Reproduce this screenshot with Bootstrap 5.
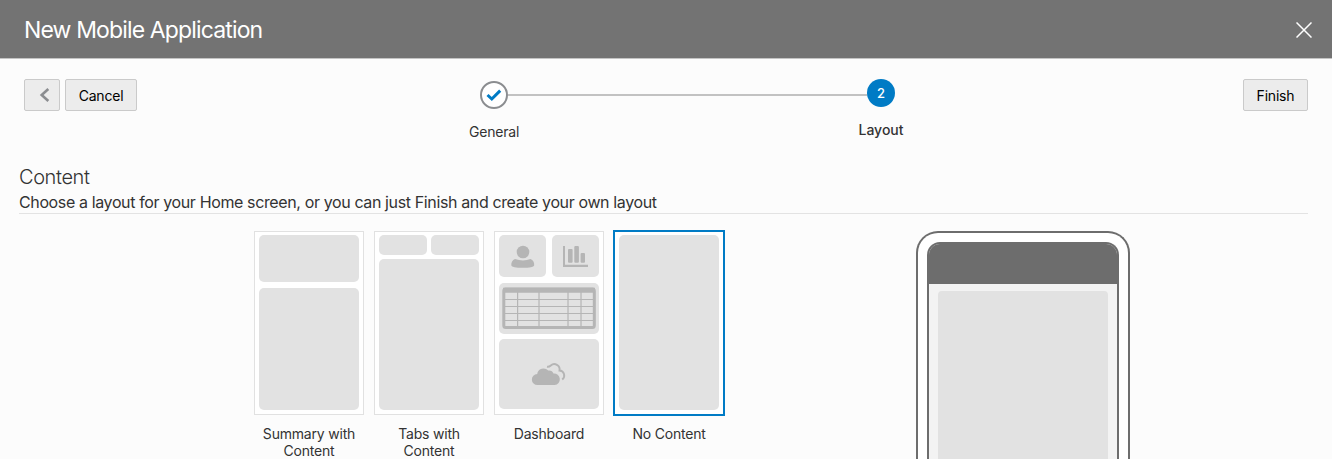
<!DOCTYPE html>
<html lang="en">
<head>
<meta charset="utf-8">
<meta name="viewport" content="width=device-width, initial-scale=1">
<title>New Mobile Application</title>
<link href="https://cdn.jsdelivr.net/npm/bootstrap@5.3.0/dist/css/bootstrap.min.css" rel="stylesheet">
<style>
  body { font-family: Inter, "Liberation Sans", sans-serif; font-size: 14px; letter-spacing: -.2px; color: #333; background: #fcfcfc; height: 459px; overflow: hidden; }
  .wizard-header { height: 59px; background: #737373; border-bottom: 1px solid #c4c4c4; padding: 0 20px 0 24px; }
  .wizard-title { font-size: 23px; font-weight: 400; line-height: 30px; letter-spacing: -.86px; padding-top: 2px; }
  .wizard-bar { padding: 20px 24px 0; height: 103px; }
  .wizard-btn { height: 32px; padding: 2px 0 0; font-size: 14px; line-height: 1; letter-spacing: -.2px; color: #000; background: #ececec; border: 1px solid #cacaca; border-radius: 2px; }
  .steps { width: 415px; margin-left: 343px; }
  .step-item { width: 28px; white-space: nowrap; line-height: 18px; }
  .step-dot { width: 28px; height: 28px; flex: none; font-size: 13px; }
  .step-done { border: 2px solid #8b8d90; background: #fff; }
  .step-now { background: #007bc5; color: #fff; font-weight: 500; }
  .step-label { margin-top: 14px; }
  .step-label-now { font-weight: 500; letter-spacing: 0; }
  .step-line { height: 2px; background: #c2c2c2; margin-top: 15px; }
  .content-area { margin: 0 24px 0 19px; border-bottom: 1px solid #e3e3e3; height: 52px; }
  .content-title { font-size: 20px; font-weight: 300; line-height: 26px; letter-spacing: -.4px; padding-top: 2px; }
  .content-hint { font-size: 16px; line-height: 20px; letter-spacing: -.375px; margin-top: 2px; }
  .choices { padding: 17px 0 0 254px; gap: 10px; height: 245px; overflow: hidden; }
  .choice { width: 110px; }
  .thumb { height: 184px; border: 1px solid #e1e1e1; background: #fff; padding: 3px 4px 4px; }
  .thumb.selected { outline: 2px solid #007bc5; outline-offset: -1px; border-color: transparent; }
  .tile { background: #e2e2e2; border-radius: 5px; flex: none; }
  .choice-name { line-height: 17px; margin-top: 10px; }
  .device { width: 214px; height: 228px; border: 2px solid #6d6d6d; border-bottom: 0; border-radius: 22px 22px 0 0; background: #fff; padding: 9px 9px 0; margin-left: 182px; }
  .screen { border: 2px solid #6d6d6d; border-bottom: 0; border-radius: 13px 13px 0 0; background: #f3f3f3; overflow: hidden; }
  .screen-top { height: 40px; background: #6d6d6d; }
  .screen-body { height: 168px; margin: 7px 9px 0; border-radius: 4px 4px 0 0; background: #e2e2e2; }
</style>
</head>
<body>
<header class="wizard-header d-flex align-items-center justify-content-between">
  <h1 class="wizard-title text-white m-0">New Mobile Application</h1>
  <svg width="16" height="16" viewBox="0 0 16 16" stroke="#fff" stroke-width="1.5" style="margin-top:2px"><path d="M.5.5l15 15M15.500.5l-15 15"/></svg>
</header>

<div class="wizard-bar d-flex align-items-start">
  <button class="wizard-btn" style="width:36px" aria-label="Back"><svg class="d-block mx-auto" width="18" height="16" viewBox="0 0 18 16" fill="none" stroke="#8b8d90" stroke-width="2.6"><path d="M15.300 1L8.700 7l6.600 6"/></svg></button>
  <button class="wizard-btn" style="width:72px;margin-left:5px">Cancel</button>
  <div class="steps d-flex align-items-start">
    <div class="step-item d-flex flex-column align-items-center" style="padding-top:2px">
      <span class="step-dot step-done rounded-circle d-flex align-items-center justify-content-center"><svg width="16" height="14" viewBox="0 0 16 14" fill="none" stroke="#007bc5" stroke-width="3"><path d="M1.500 7l4.300 4L14.200 2.600"/></svg></span>
      <span class="step-label">General</span>
    </div>
    <div class="step-line flex-fill"></div>
    <div class="step-item d-flex flex-column align-items-center">
      <span class="step-dot step-now rounded-circle d-flex align-items-center justify-content-center">2</span>
      <span class="step-label step-label-now">Layout</span>
    </div>
  </div>
  <button class="wizard-btn ms-auto" style="width:65px">Finish</button>
</div>

<section class="content-area">
  <h2 class="content-title m-0">Content</h2>
  <p class="content-hint mb-0">Choose a layout for your Home screen, or you can just Finish and create your own layout</p>
</section>

<main class="choices d-flex align-items-start">
  <div class="choice text-center">
    <div class="thumb d-flex flex-column">
      <div class="tile" style="height:47px"></div>
      <div class="tile" style="height:122px;margin-top:6px"></div>
    </div>
    <div class="choice-name">Summary with<br>Content</div>
  </div>
  <div class="choice text-center">
    <div class="thumb d-flex flex-column">
      <div class="d-flex gap-1"><div class="tile" style="width:48px;height:19.500px"></div><div class="tile" style="width:48px;height:19.500px"></div></div>
      <div class="tile" style="height:151px;margin-top:4px"></div>
    </div>
    <div class="choice-name">Tabs with<br>Content</div>
  </div>
  <div class="choice text-center">
    <div class="thumb d-flex flex-column">
      <div class="d-flex justify-content-between">
        <div class="tile" style="width:47px;height:42px"><svg class="d-block" width="47" height="42" fill="#b5b5b5"><circle cx="24" cy="17" r="6.300"/><path d="M12.300 30.500Q12 25.500 16 24Q24 26.800 31.500 24Q35.500 25.500 35.200 30.500Q34.500 32.800 23.800 32.800Q13 32.800 12.300 30.500Z"/></svg></div>
        <div class="tile" style="width:47px;height:42px"><svg class="d-block" width="47" height="42" fill="#b5b5b5"><path d="M11 11h2v18.700h23v2.200H11z"/><rect x="16" y="14" width="4.600" height="13.700" rx="1"/><rect x="22.300" y="11" width="4.600" height="16.700" rx="1"/><rect x="28.600" y="18" width="4.400" height="9.700" rx="1"/></svg></div>
      </div>
      <div class="tile" style="height:51.500px;margin-top:5.800px"><svg class="d-block" width="100" height="51" fill="none" stroke="#b5b5b5"><rect x="4.800" y="6" width="90.500" height="38.500" rx="2" stroke-width="3"/><path d="M4 7.300h92" stroke-width="5"/><path d="M6 16.500h88M6 23.500h88M6 30.500h88M6 37.500h88M18.600 9v34M40 9v34M69 9v34M82 9v34" stroke-width="1.200"/></svg></div>
      <div class="tile" style="height:69.700px;margin-top:5.200px"><svg class="d-block" width="100" height="69" viewBox="0 0 100 69"><path fill="#b5b5b5" d="M38.500 46a5.500 5.500 0 0 1-.3-11a6.300 6.300 0 0 1 11-3.400a4.800 4.800 0 0 1 5.300 3a5.700 5.700 0 0 1 1.200 11.400z"/><path fill="none" stroke="#b5b5b5" stroke-width="1.900" d="M48 27.700q2 .4 3.800-1.200a5.300 5.300 0 0 1 8.700 5a5 5 0 0 1 2.700 9"/></svg></div>
    </div>
    <div class="choice-name">Dashboard</div>
  </div>
  <div class="choice text-center">
    <div class="thumb selected d-flex flex-column">
      <div class="tile" style="height:175px"></div>
    </div>
    <div class="choice-name">No Content</div>
  </div>
  <div class="device flex-shrink-0">
    <div class="screen">
      <div class="screen-top"></div>
      <div class="screen-body"></div>
    </div>
  </div>
</main>
<script src="https://cdn.jsdelivr.net/npm/bootstrap@5.3.0/dist/js/bootstrap.bundle.min.js"></script>
</body>
</html>
